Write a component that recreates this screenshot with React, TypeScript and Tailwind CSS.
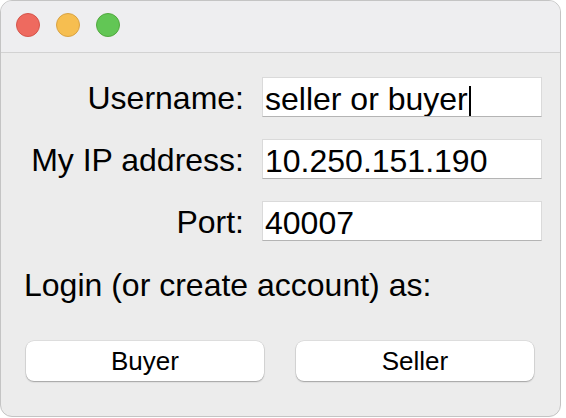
export default function App() {
  const font = { fontFamily: '"Liberation Sans", Arial, sans-serif' };
  return (
    <div className="w-[566px] h-[418px] bg-white" style={font}>
      <div className="w-[561px] h-[417px] rounded-[12px] border border-[#c4c4c4] bg-[#ececec] overflow-hidden flex flex-col">
        {/* Title bar */}
        <div className="h-[52px] shrink-0 bg-[#eeeef0] border-b border-[#d2d2d2] flex items-center gap-[16px] pl-[15px] pb-[4px]">
          <span className="w-[24px] h-[24px] rounded-full bg-[#ee6a5f] border border-[#d5554b]" />
          <span className="w-[24px] h-[24px] rounded-full bg-[#f6be50] border border-[#d9a344]" />
          <span className="w-[24px] h-[24px] rounded-full bg-[#62c655] border border-[#52a93f]" />
        </div>

        {/* Form */}
        <div className="flex flex-col pt-[24px] text-[32px] text-black">
          <div className="grid grid-cols-[243px_280px] gap-x-[18px] gap-y-[22px]">
            <Label text="Username:" />
            <Field>
              seller or buyer
              <span className="inline-block w-[2px] h-[30px] bg-black align-[-6px] ml-px" />
            </Field>
            <Label text="My IP address:" />
            <Field>10.250.151.190</Field>
            <Label text="Port:" />
            <Field>40007</Field>
          </div>

          <p className="mt-[23px] pl-[23px] h-[40px] leading-[42px]">
            Login (or create account) as:
          </p>

          <div className="mt-[37px] pl-[25px] flex gap-[32px]">
            <Button text="Buyer" />
            <Button text="Seller" />
          </div>
        </div>
      </div>
    </div>
  );
}

function Label({ text }: { text: string }) {
  return <div className="h-[40px] leading-[42px] text-right">{text}</div>;
}

function Field({ children }: { children: React.ReactNode }) {
  return (
    <div className="h-[40px] leading-[42px] bg-white border border-[#dadada] border-b-[#b4b4b4] pl-[2px] whitespace-nowrap overflow-hidden">
      {children}
    </div>
  );
}

function Button({ text }: { text: string }) {
  return (
    <button className="w-[238px] h-[40px] rounded-[8px] bg-white text-[26px] leading-[40px] text-black shadow-[0_0_0_0.5px_rgba(0,0,0,0.12),0_1px_1.5px_rgba(0,0,0,0.28)]">
      {text}
    </button>
  );
}
